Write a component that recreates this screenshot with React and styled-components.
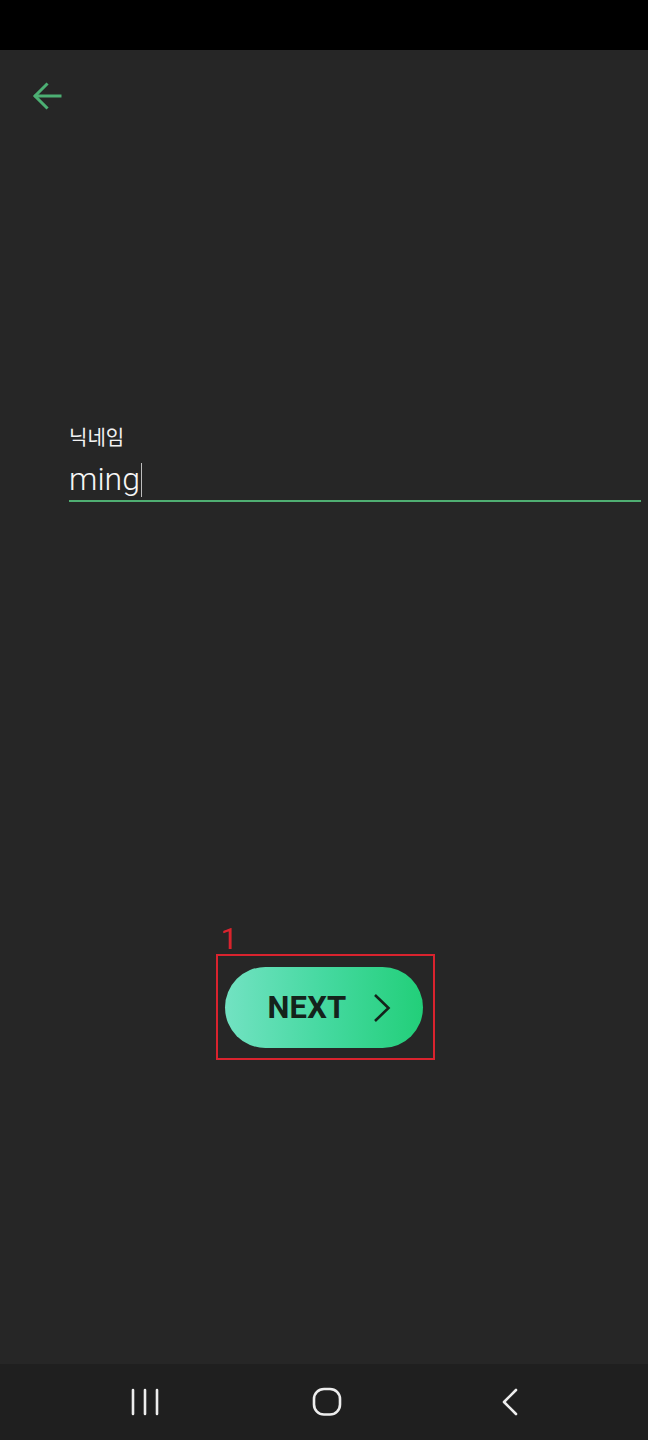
import styled, { createGlobalStyle } from 'styled-components'
import { useState } from 'react'

const GlobalStyle = createGlobalStyle`
  html, body {
    margin: 0;
    padding: 0;
    background: #262626;
  }
  * {
    box-sizing: border-box;
  }
`

const Page = styled.div`
  display: flex;
  flex-direction: column;
  min-height: 1440px;
  background: #262626;
  font-family: Roboto, "Noto Sans", "Noto Sans CJK KR", sans-serif;
`

const StatusBar = styled.div`
  height: 50px;
  background: #000;
`

const Header = styled.div`
  display: flex;
  align-items: center;
  height: 92px;
  padding-left: 23px;

  button{
    background: none;
    border: none;
    padding: 0;
    display: flex;
    cursor: pointer;
  }
`

const Form = styled.div`
  display: flex;
  flex-direction: column;
  margin-top: 280px;
  padding: 0 7px 0 69px;
`

const Label = styled.label`
  font-family: "Noto Sans CJK KR", sans-serif;
  font-size: 20px;
  line-height: 29px;
  color: #f2f2f2;
`

const Field = styled.div`
  display: flex;
  align-items: flex-end;
  height: 51px;
  padding-bottom: 3px;
  border-bottom: 2px solid #4fae72;

  .value{
    font-size: 32px;
    font-weight: 300;
    line-height: 36px;
    color: #f6f6f6;
  }

  .caret{
    width: 1px;
    height: 34px;
    margin-left: 1px;
    background: #bdbdbd;
  }
`

const ButtonArea = styled.div`
  display: flex;
  justify-content: center;
  margin-top: 452px;
  padding-left: 2px;
`

const Marked = styled.div`
  position: relative;
  padding: 13px 12px 12px 9px;

  &::before{
    content: '';
    position: absolute;
    inset: 0;
    border: 2.5px solid #d9232e;
  }

  .tag{
    position: absolute;
    left: 5px;
    top: -30px;
    font-size: 30px;
    line-height: 30px;
    color: #d9232e;
  }
`

const NextButton = styled.button`
  display: flex;
  align-items: center;
  width: 198px;
  height: 81px;
  padding: 0 32px 0 43px;
  border: none;
  border-radius: 41px;
  background: linear-gradient(90deg, #72e2c2 0%, #45d9a0 50%, #22cf79 100%);
  cursor: pointer;

  span{
    font-family: Roboto, sans-serif;
    font-weight: 700;
    font-size: 31px;
    color: #14231b;
    letter-spacing: 0.2px;
  }

  svg{
    margin-left: auto;
  }
`

const Spacer = styled.div`
  flex: 1;
`

const NavBar = styled.div`
  display: flex;
  align-items: center;
  justify-content: center;
  gap: 142px;
  height: 76px;
  padding-left: 6px;
  background: #1f1f1f;
`

function App() {
  let [nickname] = useState('ming')

  return (
    <Page>
      <GlobalStyle />
      <StatusBar />
      <Header>
        <button>
          <svg width='48' height='48' viewBox='0 0 48 48' fill='none' stroke='#4caf73' strokeWidth='3' strokeLinecap='square'>
            <path d='M37 24H13' />
            <path d='M23.5 12.5L12 24L23.5 35.5' />
          </svg>
        </button>
      </Header>
      <Form>
        <Label>닉네임</Label>
        <Field>
          <span className='value'>{nickname}</span>
          <span className='caret' />
        </Field>
      </Form>
      <ButtonArea>
        <Marked>
          <span className='tag'>1</span>
          <NextButton>
            <span>NEXT</span>
            <svg width='18' height='28' viewBox='0 0 18 28' fill='none' stroke='#14231b' strokeWidth='2.6'>
              <path d='M2 1L15.5 14L2 27' />
            </svg>
          </NextButton>
        </Marked>
      </ButtonArea>
      <Spacer />
      <NavBar>
        <svg width='40' height='40' viewBox='0 0 40 40' fill='none' stroke='#ededed' strokeWidth='2.6' strokeLinecap='round'>
          <path d='M8 8V32M20 8V32M32 8V32' />
        </svg>
        <svg width='40' height='40' viewBox='0 0 40 40' fill='none' stroke='#ededed' strokeWidth='2.6'>
          <rect x='7' y='7' width='26' height='25.5' rx='10' />
        </svg>
        <svg width='40' height='40' viewBox='0 0 40 40' fill='none' stroke='#ededed' strokeWidth='2.6' strokeLinecap='round' strokeLinejoin='round'>
          <path d='M27 8L15 20L27 32' />
        </svg>
      </NavBar>
    </Page>
  )
}

export default App
